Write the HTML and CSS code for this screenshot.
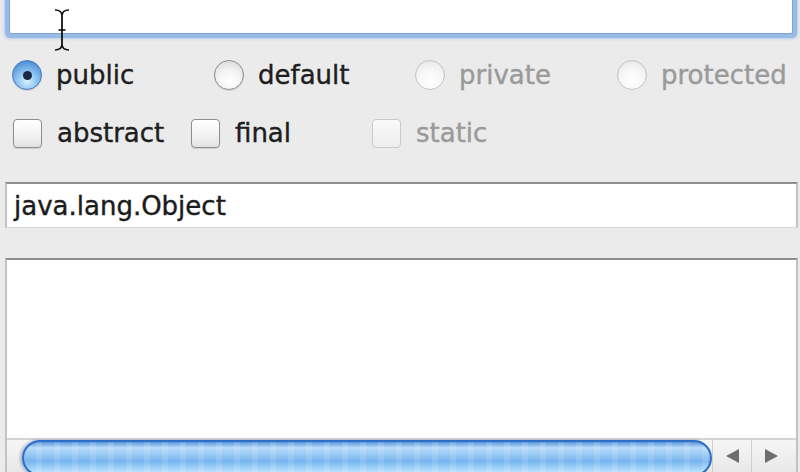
FILE: index.html
```html
<!DOCTYPE html>
<html>
<head>
<meta charset="utf-8">
<link rel="stylesheet" href="styles.css">
</head>
<body>
<div class="panel">
  <div class="name-field"></div>
  <div class="radios">
    <label class="opt"><span class="radio on"></span><span class="lbl">public</span></label>
    <label class="opt"><span class="radio"></span><span class="lbl">default</span></label>
    <label class="opt off"><span class="radio dis"></span><span class="lbl">private</span></label>
    <label class="opt off"><span class="radio dis"></span><span class="lbl">protected</span></label>
  </div>
  <div class="checks">
    <label class="opt"><span class="check"></span><span class="lbl">abstract</span></label>
    <label class="opt"><span class="check"></span><span class="lbl">final</span></label>
    <label class="opt off"><span class="check dis"></span><span class="lbl">static</span></label>
  </div>
  <div class="super-field"><span class="val">java.lang.Object</span></div>
  <div class="list">
    <div class="list-body"></div>
    <div class="hscroll">
      <div class="track-end"></div>
      <div class="thumb"></div>
      <div class="arrow-btn"><span class="tri left"></span></div>
      <div class="arrow-btn"><span class="tri right"></span></div>
    </div>
  </div>
  <svg class="ibeam" width="20" height="44" viewBox="0 0 20 44">
    <path d="M3 2 Q10 2 10 8 Q10 2 17 2" fill="none" stroke="#111" stroke-width="1.6"/>
    <path d="M10 8 L10 36" stroke="#111" stroke-width="1.8"/>
    <path d="M6.5 22 L13.5 22" stroke="#111" stroke-width="1.6"/>
    <path d="M3 42 Q10 42 10 36 Q10 42 17 42" fill="none" stroke="#111" stroke-width="1.6"/>
  </svg>
</div>
</body>
</html>
```

FILE: styles.css
```css
html, body {
  margin: 0;
  padding: 0;
  background: #ebebeb;
  overflow: hidden;
}
.panel {
  position: relative;
  width: 800px;
  height: 472px;
  display: flex;
  flex-direction: column;
  font-family: "DejaVu Sans", "Verdana", sans-serif;
  font-size: 26px;
  color: #1e1e1e;
  -webkit-text-stroke: 0.4px currentColor;
}
.name-field {
  margin: -12px 7px 0 9px;
  height: 44px;
  background: #fff;
  border: 1px solid #7ea4d4;
  border-radius: 2px;
  box-shadow: 0 0 0 4px #96bbe4, 0 0 3px 5px rgba(140,180,225,0.55);
}
.radios {
  margin-top: 25px;
  padding-left: 12px;
  display: grid;
  grid-template-columns: 202px 201px 202px auto;
  height: 32px;
  align-items: center;
}
.checks {
  margin-top: 26px;
  padding-left: 13px;
  display: grid;
  grid-template-columns: 178px 181px auto;
  height: 30px;
  align-items: center;
}
.opt {
  display: flex;
  align-items: center;
  white-space: nowrap;
}
.opt .lbl {
  line-height: 32px;
}
.opt.off .lbl {
  color: #9a9a9a;
}
.radio {
  width: 30px;
  height: 30px;
  border-radius: 50%;
  box-sizing: border-box;
  border: 1.5px solid #8c8c8c;
  background: radial-gradient(circle at 50% 72%, #ffffff 0%, #f4f4f4 45%, #d2d2d2 100%);
  margin-right: 14px;
  position: relative;
  box-shadow: 0 1px 1px rgba(0,0,0,0.12);
}
.radio.on {
  border-color: #4a78b8;
  background: radial-gradient(circle at 50% 72%, #d8f0ff 0%, #8cc4f2 40%, #4f90d8 80%, #3a6fb8 100%);
}
.radio.on::after {
  content: "";
  position: absolute;
  left: 50%;
  top: 50%;
  width: 9px;
  height: 9px;
  margin: -4.5px 0 0 -4.5px;
  border-radius: 50%;
  background: #1a2a44;
}
.radio.dis {
  border-color: #c4c4c4;
  background: radial-gradient(circle at 50% 70%, #ffffff 0%, #f6f6f6 50%, #e2e2e2 100%);
  box-shadow: none;
}
.check {
  width: 29px;
  height: 29px;
  box-sizing: border-box;
  border: 1.5px solid #8e8e8e;
  border-radius: 4px;
  background: linear-gradient(#ffffff, #f2f2f2 60%, #e2e2e2);
  margin-right: 15px;
  box-shadow: 0 1px 1px rgba(0,0,0,0.12);
}
.check.dis {
  border-color: #cacaca;
  background: linear-gradient(#fafafa, #ededed);
  box-shadow: none;
}
.super-field {
  margin: 35px 2px 0 5px;
  height: 46px;
  box-sizing: border-box;
  background: #fff;
  border-top: 2px solid #8e8e8e;
  border-left: 2px solid #c2c2c2;
  border-right: 2px solid #c2c2c2;
  border-bottom: 1px solid #d8d8d8;
  display: flex;
  align-items: center;
  padding-left: 7px;
}
.val {
  line-height: 30px;
  color: #1c1c1c;
}
.list {
  margin: 30px 2px 0 5px;
  flex: 1;
  display: flex;
  flex-direction: column;
  background: #fff;
  border-top: 2px solid #8e8e8e;
  border-left: 2px solid #c2c2c2;
  border-right: 2px solid #c2c2c2;
}
.list-body {
  flex: 1;
}
.hscroll {
  height: 32px;
  display: flex;
  border-top: 2px solid #d4d4d4;
  background: linear-gradient(#f6f6f6, #e8e8e8);
}
.track-end {
  width: 15px;
}
.thumb {
  width: 690px;
  height: 36px;
  border-radius: 18px;
  box-sizing: border-box;
  border: 2px solid #2f6ec6;
  background:
    repeating-linear-gradient(90deg, rgba(255,255,255,0) 0 12px, rgba(255,255,255,0.12) 12px 18px),
    linear-gradient(#5a94da 0%, #b8dcfa 18%, #96c8f4 40%, #78b4ee 60%, #a6d6fa 85%, #c8e8ff 100%);
  box-shadow: -2px 0 3px rgba(30,70,150,0.35);
}
.arrow-btn {
  width: 38px;
  display: flex;
  align-items: center;
  justify-content: center;
  border-left: 1px solid #cfcfcf;
}
.arrow-btn:first-of-type {
  margin-left: 6px;
}
.tri {
  width: 0;
  height: 0;
  border-top: 7px solid transparent;
  border-bottom: 7px solid transparent;
}
.tri.left {
  border-right: 13px solid #6e6e6e;
}
.tri.right {
  border-left: 13px solid #6e6e6e;
}
.ibeam {
  position: absolute;
  left: 52px;
  top: 8px;
}
```
